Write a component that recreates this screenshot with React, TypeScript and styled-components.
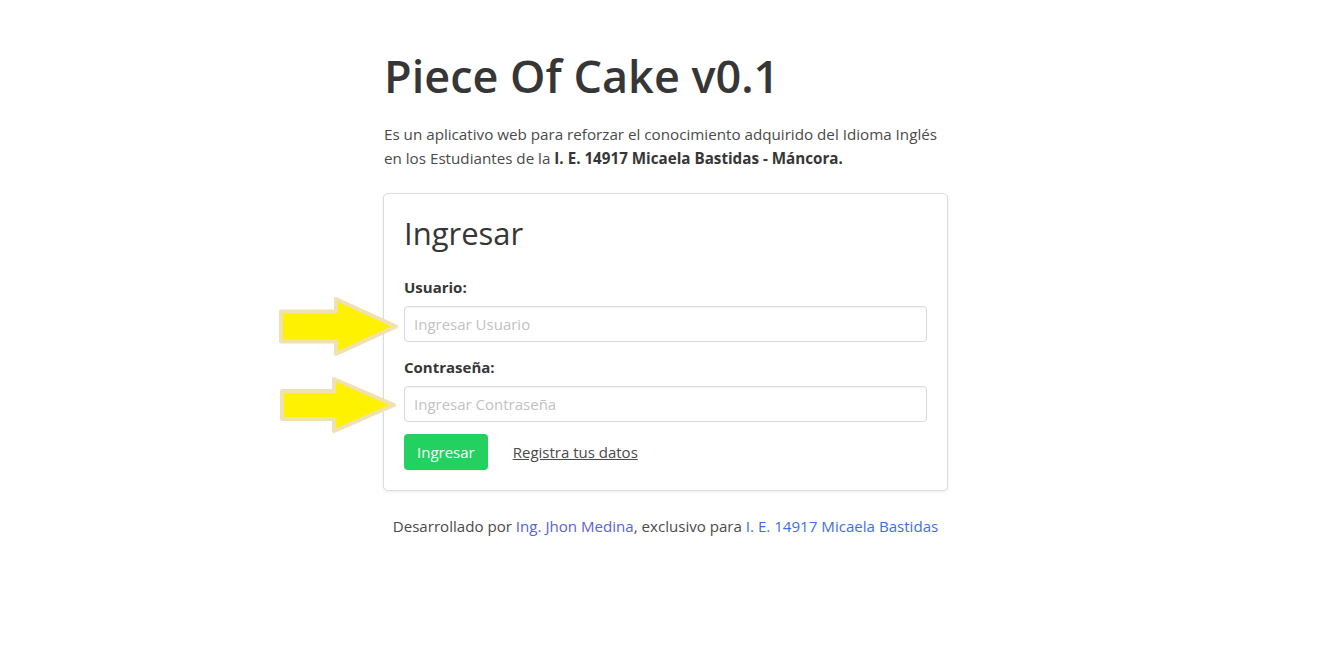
import { FC } from "react";
import styled, { createGlobalStyle } from "styled-components";

const GlobalStyle = createGlobalStyle`
  html, body {
    margin: 0;
    padding: 0;
    background: #ffffff;
  }
  body {
    font-family: "Open Sans", "Noto Sans", "Liberation Sans", sans-serif;
    font-size: 16px;
    line-height: 1.5;
    color: #4a4a4a;
  }
  * {
    box-sizing: border-box;
  }
`;

const Page = styled("main")({
  display: "flex",
  justifyContent: "center",
  paddingTop: 46,
  paddingRight: 8,
});

const Column = styled("div")({
  width: 565,
  display: "flex",
  flexDirection: "column",
});

const Title = styled("h1")({
  margin: 0,
  fontSize: 45,
  fontWeight: 600,
  lineHeight: "60px",
  color: "#363636",
  paddingLeft: 1,
});

const Lead = styled("p")({
  margin: "16px 0 0",
  paddingLeft: 1,
  fontSize: 15.2,
  lineHeight: "24px",
  color: "#4a4a4a",
  "& strong": {
    fontWeight: 700,
    color: "#363636",
  },
});

const Card = styled("section")({
  marginTop: 23,
  border: "1px solid #dcdcdc",
  borderRadius: 5,
  padding: 20,
  boxShadow: "0 1px 3px rgba(10, 10, 10, 0.08)",
  background: "#fff",
});

const CardTitle = styled("h2")({
  margin: 0,
  fontSize: 31,
  fontWeight: 500,
  lineHeight: "38px",
  color: "#363636",
});

const Form = styled("form")({
  marginTop: 23,
  display: "flex",
  flexDirection: "column",
});

const Field = styled("div")<{ $gap?: number }>((props) => ({
  display: "flex",
  flexDirection: "column",
  gap: 7,
  marginTop: props.$gap ?? 0,
}));

const InputWrap = styled("div")({
  position: "relative",
});

const Label = styled("label")({
  fontSize: 15,
  fontWeight: 700,
  lineHeight: "24px",
  color: "#363636",
});

const Input = styled("input")({
  height: 36,
  width: "100%",
  padding: "0 9px",
  border: "1px solid #dbdbdb",
  borderRadius: 4,
  fontFamily: "inherit",
  fontSize: 15,
  color: "#363636",
  boxShadow: "inset 0 1px 2px rgba(10, 10, 10, 0.05)",
  "&::placeholder": {
    color: "#c2c2c2",
  },
});

const Actions = styled("div")({
  marginTop: 12,
  display: "flex",
  alignItems: "center",
  gap: 25,
});

const Button = styled("button")({
  height: 36,
  padding: "0 13px",
  border: "none",
  borderRadius: 4,
  background: "#23d160",
  color: "#fff",
  fontFamily: "inherit",
  fontSize: 15,
  cursor: "pointer",
});

const TextLink = styled("a")({
  color: "#4a4a4a",
  fontSize: 15,
  textDecoration: "underline",
});

const Footer = styled("p")({
  margin: "23px 0 0",
  textAlign: "center",
  fontSize: 15.1,
  lineHeight: "24px",
  color: "#4a4a4a",
});

const FooterLink = styled("a")<{ $visited?: boolean }>((props) => ({
  color: props.$visited ? "#5a62d6" : "#3d6fe4",
  textDecoration: "none",
}));

const ArrowSvg = styled("svg")<{ $left: number; $top: number }>((props) => ({
  position: "absolute",
  left: props.$left,
  top: props.$top,
  pointerEvents: "none",
}));

const Arrow: FC<{ w: number; h: number; left: number; top: number; shaft: number; head: number }> = ({
  w,
  h,
  left,
  top,
  shaft,
  head,
}) => {
  const mid = h / 2;
  const s = 2;
  const pts = [
    [s, mid - shaft / 2],
    [head, mid - shaft / 2],
    [head, s],
    [w - s, mid],
    [head, h - s],
    [head, mid + shaft / 2],
    [s, mid + shaft / 2],
  ]
    .map((p) => p.join(","))
    .join(" ");
  return (
    <ArrowSvg $left={left} $top={top} width={w} height={h} viewBox={`0 0 ${w} ${h}`}>
      <polygon
        points={pts}
        fill="#fff200"
        stroke="#efe1b0"
        strokeWidth={4}
        strokeLinejoin="round"
      />
    </ArrowSvg>
  );
};

export default function App() {
  return (
    <>
      <GlobalStyle />
      <Page>
        <Column>
          <Title>Piece Of Cake v0.1</Title>
          <Lead>
            Es un aplicativo web para reforzar el conocimiento adquirido del Idioma Inglés
            <br />
            en los Estudiantes de la <strong>I. E. 14917 Micaela Bastidas - Máncora.</strong>
          </Lead>
          <Card>
            <CardTitle>Ingresar</CardTitle>
            <Form onSubmit={(e) => e.preventDefault()}>
              <Field>
                <Label htmlFor="usuario">Usuario:</Label>
                <InputWrap>
                  <Input id="usuario" type="text" placeholder="Ingresar Usuario" />
                  <Arrow w={119} h={59} left={-125} top={-9} shaft={30} head={57} />
                </InputWrap>
              </Field>
              <Field $gap={13}>
                <Label htmlFor="contrasena">Contraseña:</Label>
                <InputWrap>
                  <Input id="contrasena" type="password" placeholder="Ingresar Contraseña" />
                  <Arrow w={116} h={56} left={-124} top={-9} shaft={28} head={54} />
                </InputWrap>
              </Field>
              <Actions>
                <Button type="submit">Ingresar</Button>
                <TextLink href="#">Registra tus datos</TextLink>
              </Actions>
            </Form>
          </Card>
          <Footer>
            Desarrollado por <FooterLink href="#" $visited>Ing. Jhon Medina</FooterLink>, exclusivo para{" "}
            <FooterLink href="#">I. E. 14917 Micaela Bastidas</FooterLink>
          </Footer>
        </Column>
      </Page>
    </>
  );
}
